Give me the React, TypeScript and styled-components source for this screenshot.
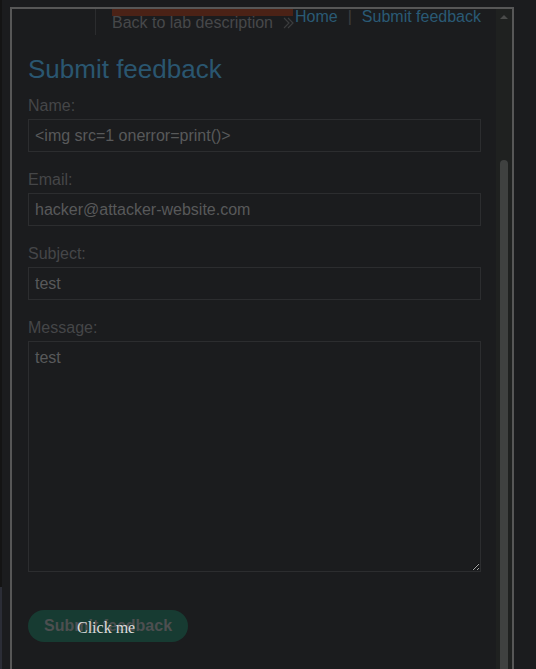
import React from 'react';
import styled, { createGlobalStyle } from 'styled-components';

const GlobalStyle = createGlobalStyle`
  html, body {
    margin: 0;
    padding: 0;
    background: #1b1c1e;
    overflow: hidden;
    height: 100%;
  }
`;

const Page = styled.div`
  display: flex;
  height: 669px;
  position: relative;
`;

const EdgeStrip = styled.div`
  width: 2px;
  flex-shrink: 0;
  background: linear-gradient(to bottom, #141414 0, #141414 587px, #2b2d36 587px);
`;

const Main = styled.div`
  flex: 1;
  padding: 7px 0 0 8px;
  position: relative;
`;

const Frame = styled.div`
  width: 500px;
  height: 720px;
  border: 2px solid #575757;
  display: flex;
  background: #1b1c1e;
`;

const Content = styled.div`
  flex: 1;
  padding: 0 15px 0 16px;
  font-family: 'Liberation Sans', Arial, sans-serif;
`;

const Header = styled.div`
  display: flex;
  height: 26px;
  margin-left: -16px;
`;

const LogoArea = styled.div`
  width: 83px;
  border-right: 1px solid #2b2c2e;
  flex-shrink: 0;
`;

const TitleBlock = styled.div`
  margin-left: 16px;
  display: flex;
  flex-direction: column;
`;

const Banner = styled.div`
  width: 181px;
  height: 7px;
  background: #4b2216;
`;

const BackLink = styled.div`
  display: flex;
  align-items: center;
  gap: 10px;
  font-size: 16px;
  line-height: 14px;
  color: #47484a;
  white-space: nowrap;
`;

const Nav = styled.div`
  display: flex;
  gap: 10px;
  margin-left: 1px;
  font-size: 16px;
  line-height: 16px;
  color: #2a5a75;
  white-space: nowrap;
`;

const NavSep = styled.span`
  color: #3d3e40;
`;

const Heading = styled.h1`
  margin: 19px 0 12px;
  font-size: 26px;
  line-height: 30px;
  font-weight: normal;
  color: #2a5670;
`;

const Field = styled.div<{ $last?: boolean }>`
  display: flex;
  flex-direction: column;
  margin-bottom: ${(p) => (p.$last ? '38px' : '18px')};
`;

const Label = styled.label`
  font-size: 16px;
  line-height: 20px;
  color: #454648;
  margin-bottom: 3px;
`;

const Input = styled.input`
  box-sizing: border-box;
  height: 33px;
  width: 453px;
  padding: 0 6px;
  border: 1px solid #2c2d2f;
  background: transparent;
  font-family: 'Liberation Sans', Arial, sans-serif;
  font-size: 16px;
  color: #58595a;
  outline: none;
`;

const TextArea = styled.textarea`
  box-sizing: border-box;
  height: 231px;
  width: 453px;
  padding: 6px 6px;
  border: 1px solid #2c2d2f;
  background: transparent;
  font-family: 'Liberation Sans', Arial, sans-serif;
  font-size: 16px;
  line-height: 20px;
  color: #58595a;
  outline: none;
  resize: both;
  color-scheme: dark;
`;

const SubmitButton = styled.button`
  height: 32px;
  padding: 0 16px;
  border: none;
  border-radius: 16px;
  background: #173b32;
  color: #4d4f50;
  font-family: 'Liberation Sans', Arial, sans-serif;
  font-size: 16px;
  font-weight: bold;
  align-self: flex-start;
`;

const Scrollbar = styled.div`
  width: 16px;
  flex-shrink: 0;
  background: #1f2120;
  display: flex;
  flex-direction: column;
  align-items: center;
`;

const ArrowUp = styled.div`
  margin-top: 6px;
  width: 0;
  height: 0;
  border-left: 4px solid transparent;
  border-right: 4px solid transparent;
  border-bottom: 4px solid #4a4b4a;
`;

const Thumb = styled.div`
  margin-top: 141px;
  width: 8px;
  flex: 1;
  background: #3f4140;
  border-radius: 4px 4px 0 0;
`;

const Decoy = styled.div`
  position: absolute;
  left: 75px;
  top: 619px;
  font-family: 'Liberation Serif', 'Times New Roman', serif;
  font-size: 16px;
  color: #dcdcdc;
`;

const Chevrons = () => (
  <svg width="11" height="12" viewBox="0 0 11 12" fill="none" stroke="#3c3d3e" strokeWidth="1.2">
    <path d="M1 1l5 5-5 5" />
    <path d="M5 1l5 5-5 5" />
  </svg>
);

export default function App() {
  return (
    <>
      <GlobalStyle />
      <Page>
        <EdgeStrip />
        <Main>
          <Frame>
            <Content>
              <Header>
                <LogoArea />
                <TitleBlock>
                  <Banner />
                  <BackLink>
                    Back to lab description <Chevrons />
                  </BackLink>
                </TitleBlock>
                <Nav>
                  <span>Home</span>
                  <NavSep>|</NavSep>
                  <span>Submit feedback</span>
                </Nav>
              </Header>
              <Heading>Submit feedback</Heading>
              <Field>
                <Label>Name:</Label>
                <Input defaultValue="<img src=1 onerror=print()>" />
              </Field>
              <Field>
                <Label>Email:</Label>
                <Input defaultValue="hacker@attacker-website.com" />
              </Field>
              <Field>
                <Label>Subject:</Label>
                <Input defaultValue="test" />
              </Field>
              <Field $last>
                <Label>Message:</Label>
                <TextArea defaultValue="test" />
              </Field>
              <SubmitButton>Submit feedback</SubmitButton>
            </Content>
            <Scrollbar>
              <ArrowUp />
              <Thumb />
            </Scrollbar>
          </Frame>
          <Decoy>Click me</Decoy>
        </Main>
      </Page>
    </>
  );
}
